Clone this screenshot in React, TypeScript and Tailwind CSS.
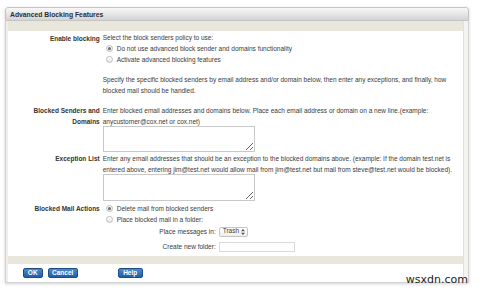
import React from 'react';

const Radio = ({ checked = false }: { checked?: boolean }) => (
  <span className="inline-flex h-[7px] w-[7px] shrink-0 items-center justify-center rounded-full border border-[#bdbdbd] bg-gradient-to-b from-white to-[#e6e6e6]">
    {checked && <span className="h-[3px] w-[3px] rounded-full bg-[#6a6a6a]" />}
  </span>
);

const RadioLine = ({ checked, label }: { checked?: boolean; label: string }) => (
  <div className="flex h-[11px] items-center gap-[4px] pl-[3px]">
    <Radio checked={checked} />
    <span>{label}</span>
  </div>
);

const Label = ({ children }: { children: React.ReactNode }) => (
  <div className="text-right font-bold text-[#333]">{children}</div>
);

const BlueButton = ({ label, width }: { label: string; width: string }) => (
  <button
    className={`flex h-[10px] items-center justify-center rounded-[2px] border border-[#1c4d86] bg-gradient-to-b from-[#4d8ad0] to-[#1f5ea8] text-[6.5px] font-bold leading-none text-white ${width}`}
  >
    {label}
  </button>
);

const App = () => {
  return (
    <div className="relative h-[289px] w-[480px] overflow-hidden bg-white font-['Liberation_Sans',Arial,sans-serif] text-[6.5px] leading-[11px] text-[#3a3a3a]">
      <div className="ml-[5px] mt-[7px] w-[464px] shadow-[0_1px_3px_rgba(0,0,0,0.18)]">
        {/* header */}
        <div className="flex h-[14px] items-center rounded-t-[3px] border border-[#c4c4c4] bg-gradient-to-b from-[#f8f8f8] to-[#d4d4d4] pl-[4px] text-[6.8px] font-bold text-[#2e2e2e]">
          Advanced Blocking Features
        </div>

        <div className="border-x border-b border-[#d2d2d2]">
          <div className="flex">
            <div className="w-[2px] bg-[#efede7]" />
            <div className="flex-1 bg-white">
              <div className="h-[10px] bg-[#e9e6dc]" />

              <div className="grid grid-cols-[92px_360px] gap-x-[3px] pt-[2px]">
                <Label>Enable blocking</Label>
                <div>
                  <div className="h-[10px] leading-[10px]">Select the block senders policy to use:</div>
                  <RadioLine checked label="Do not use advanced block sender and domains functionality" />
                  <RadioLine label="Activate advanced blocking features" />
                  <div className="mt-[9px] whitespace-nowrap">
                    Specify the specific blocked senders by email address and/or domain below, then enter any exceptions, and finally, how
                    <br />
                    blocked mail should be handled.
                  </div>
                </div>

                <div className="mt-[9px]">
                  <Label>
                    Blocked Senders and
                    <br />
                    Domains
                  </Label>
                </div>
                <div className="mt-[9px]">
                  <div className="whitespace-nowrap">
                    Enter blocked email addresses and domains below. Place each email address or domain on a new line.(example:
                    <br />
                    anycustomer@cox.net or cox.net)
                  </div>
                  <textarea className="-mt-[1px] block h-[26px] w-[152px] resize border border-[#c9c9c9] bg-white" />
                </div>

                <div className="mt-[1px]">
                  <Label>Exception List</Label>
                </div>
                <div className="mt-[1px]">
                  <div className="whitespace-nowrap">
                    Enter any email addresses that should be an exception to the blocked domains above. (example: If the domain test.net is
                    <br />
                    entered above, entering jim@test.net would allow mail from jim@test.net but mail from steve@test.net would be blocked).
                  </div>
                  <textarea className="-mt-[1px] block h-[27px] w-[152px] resize border border-[#c9c9c9] bg-white" />
                </div>

                <div className="mt-[2px]">
                  <Label>Blocked Mail Actions</Label>
                </div>
                <div className="mt-[2px]">
                  <RadioLine checked label="Delete mail from blocked senders" />
                  <RadioLine label="Place blocked mail in a folder:" />
                  <div className="mt-[1px] grid grid-cols-[113px_auto] items-center gap-x-[3px] gap-y-[4px]">
                    <div className="text-right">Place messages in:</div>
                    <div className="flex h-[10px] w-[29px] items-center justify-between rounded-[2px] border border-[#c4c4c4] bg-gradient-to-b from-white to-[#eeeeee] pl-[3px] pr-[2px] leading-none">
                      <span>Trash</span>
                      <svg width="4" height="6" viewBox="0 0 4 6" fill="#555">
                        <path d="M2 0 L4 2.3 H0 Z" />
                        <path d="M2 6 L4 3.7 H0 Z" />
                      </svg>
                    </div>
                    <div className="text-right">Create new folder:</div>
                    <div className="h-[10px] w-[76px] border border-[#dadada] bg-white" />
                  </div>
                </div>
              </div>

              <div className="mt-[4px] h-[8px] bg-[#e9e6dc]" />
              <div className="flex h-[18px] items-center pl-[15px]">
                <BlueButton label="OK" width="w-[20px]" />
                <div className="ml-[5px]">
                  <BlueButton label="Cancel" width="w-[30px]" />
                </div>
                <div className="ml-[40px]">
                  <BlueButton label="Help" width="w-[25px]" />
                </div>
              </div>
            </div>
            <div className="w-[6px] border-l border-[#e2e0da] bg-[#f4f3ef]" />
          </div>
        </div>
      </div>

      <div className="absolute bottom-[3px] right-[12px] font-['DejaVu_Sans',sans-serif] text-[11px] leading-[13px] text-[#222]">
        wsxdn.com
      </div>
    </div>
  );
};

export default App;
